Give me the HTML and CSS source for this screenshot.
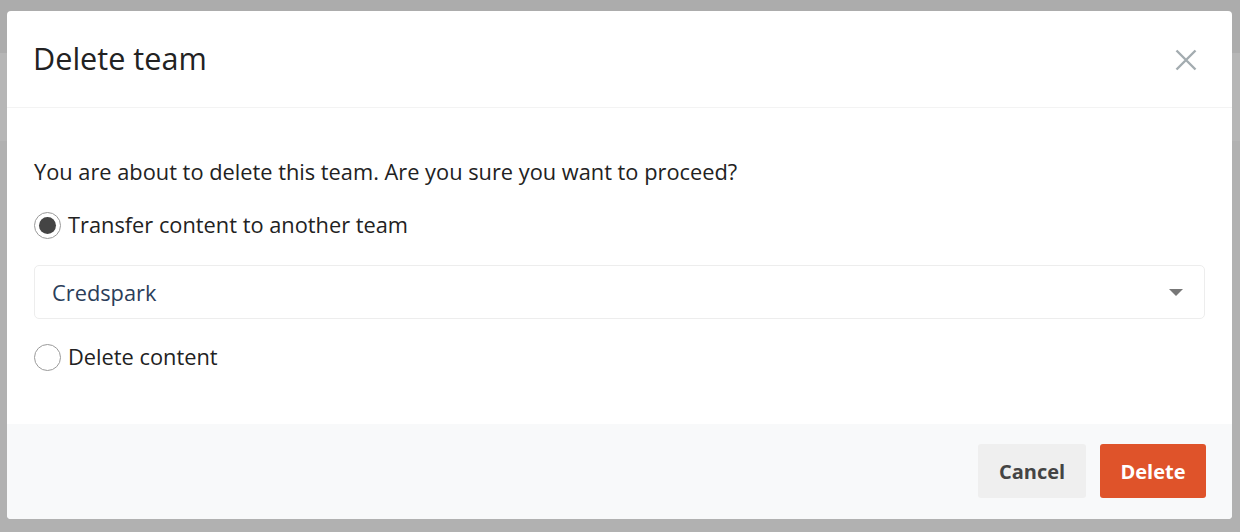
FILE: index.html
```html
<!DOCTYPE html>
<html>
<head>
<meta charset="utf-8">
<link rel="stylesheet" href="styles.css">
</head>
<body>
<div class="backdrop">
  <div class="bg-band bg-top"></div>
  <div class="bg-band bg-mid"></div>
  <div class="modal">
    <div class="modal-header">
      <h2 class="modal-title">Delete team</h2>
      <button class="close-btn" aria-label="Close">
        <svg width="22" height="22" viewBox="0 0 22 22"><path d="M1.5 1.5 L20.5 20.5 M20.5 1.5 L1.5 20.5" stroke="#a3acb0" stroke-width="2.4" fill="none"/></svg>
      </button>
    </div>
    <div class="modal-body">
      <p class="intro">You are about to delete this team. Are you sure you want to proceed?</p>
      <label class="radio-row">
        <span class="radio checked"><span class="dot"></span></span>
        <span>Transfer content to another team</span>
      </label>
      <div class="select">
        <span class="select-value">Credspark</span>
        <span class="caret"></span>
      </div>
      <label class="radio-row">
        <span class="radio"></span>
        <span>Delete content</span>
      </label>
    </div>
    <div class="modal-footer">
      <button class="btn btn-cancel">Cancel</button>
      <button class="btn btn-delete">Delete</button>
    </div>
  </div>
</div>
</body>
</html>
```

FILE: styles.css
```css
* { box-sizing: border-box; }
html, body { margin: 0; padding: 0; }
body {
  width: 1240px;
  height: 532px;
  overflow: hidden;
  background: #b1b1b1;
  font-family: "Open Sans", "Noto Sans", sans-serif;
}
.backdrop {
  position: relative;
  width: 1240px;
  height: 532px;
  padding: 11px 8px 13px 7px;
}
.bg-band { position: absolute; left: 0; width: 1240px; }
.bg-top { top: 0; height: 53px; background: #acacac; }
.bg-mid { top: 53px; height: 88px; background: #b6b6b6; }
.modal {
  position: relative;
  background: #fff;
  border-radius: 4px;
  height: 508px;
  display: flex;
  flex-direction: column;
  overflow: hidden;
}
.modal-header {
  height: 97px;
  border-bottom: 1px solid #f3f3f3;
  display: flex;
  align-items: center;
  justify-content: space-between;
  padding: 0 35px 0 26px;
  flex: none;
}
.modal-title {
  margin: 0;
  font-size: 30.6px;
  font-weight: 400;
  color: #222;
  padding-bottom: 2px;
}
.close-btn {
  background: none;
  border: 0;
  padding: 0;
  width: 22px;
  height: 22px;
  display: block;
  margin-top: 1px;
}
.close-btn svg { display: block; }
.modal-body {
  flex: 1;
  padding: 49px 27px 0 27px;
  color: #222;
  font-size: 21.8px;
}
.intro {
  margin: 0 0 23px 0;
  line-height: 30px;
}
.radio-row {
  display: flex;
  align-items: center;
  gap: 7px;
  line-height: 30px;
}
.radio {
  width: 27px;
  height: 27px;
  border-radius: 50%;
  border: 1px solid #9a9a9a;
  display: flex;
  align-items: center;
  justify-content: center;
  flex: none;
}
.radio .dot {
  width: 17px;
  height: 17px;
  border-radius: 50%;
  background: #444;
}
.select {
  margin: 25px 0 23px 0;
  height: 54px;
  border: 1px solid #ededed;
  border-radius: 5px;
  display: flex;
  align-items: center;
  justify-content: space-between;
  padding: 0 21px 0 17px;
}
.select-value {
  color: #2b3e5a;
  font-size: 21.8px;
}
.caret {
  width: 0;
  height: 0;
  border-left: 7px solid transparent;
  border-right: 7px solid transparent;
  border-top: 7px solid #777;
}
.modal-footer {
  height: 95px;
  flex: none;
  background: #f8f9fa;
  display: flex;
  justify-content: flex-end;
  align-items: flex-start;
  gap: 14px;
  padding: 20px 26px 0 0;
}
.btn {
  height: 54px;
  border: 0;
  border-radius: 3px;
  font-family: "Open Sans", "Noto Sans", sans-serif;
  font-size: 20px;
  font-weight: 700;
  cursor: pointer;
}
.btn-cancel {
  width: 108px;
  background: #efefef;
  color: #444;
}
.btn-delete {
  width: 106px;
  background: #df532a;
  color: #fff;
}
```
